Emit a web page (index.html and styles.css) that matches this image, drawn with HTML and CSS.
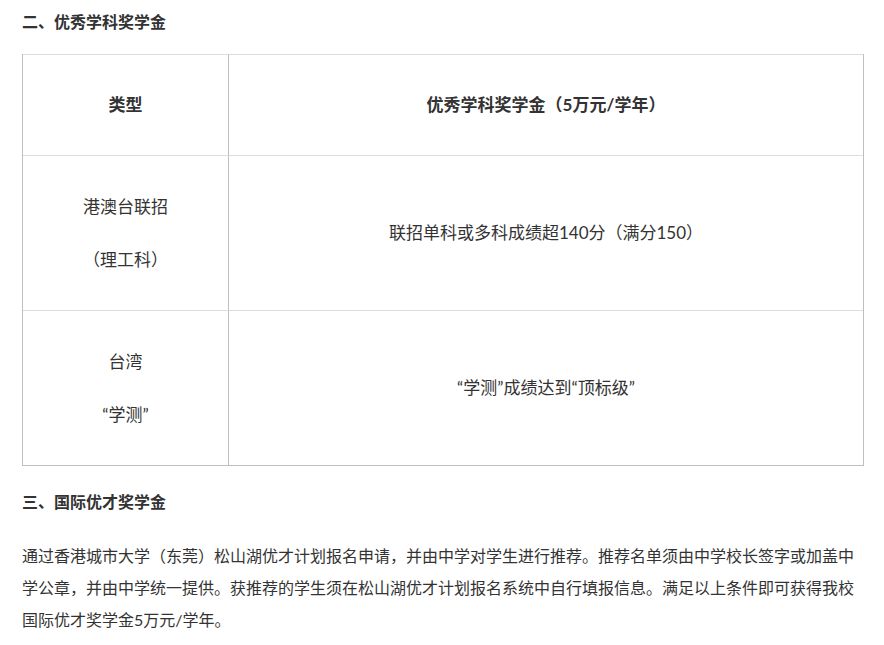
FILE: index.html
```html
<!DOCTYPE html>
<html lang="zh-CN">
<head>
<meta charset="utf-8">
<title>奖学金</title>
<link rel="stylesheet" href="styles.css">
</head>
<body>
<div class="content">
  <h3 class="sec-title">二、优秀学科奖学金</h3>
  <table class="award-table">
    <tr class="head-row">
      <td class="col-type">类型</td>
      <td class="col-val">优秀学科奖学金（5万元/学年）</td>
    </tr>
    <tr class="body-row">
      <td class="col-type"><p>港澳台联招</p><p>（理工科）</p></td>
      <td class="col-val">联招单科或多科成绩超140分（满分150）</td>
    </tr>
    <tr class="body-row">
      <td class="col-type"><p>台湾</p><p>“学测”</p></td>
      <td class="col-val">“学测”成绩达到“顶标级”</td>
    </tr>
  </table>
  <h3 class="sec-title sec-title-2">三、国际优才奖学金</h3>
  <p class="para">通过香港城市大学（东莞）松山湖优才计划报名申请，并由中学对学生进行推荐。推荐名单须由中学校长签字或加盖中学公章，并由中学统一提供。获推荐的学生须在松山湖优才计划报名系统中自行填报信息。满足以上条件即可获得我校国际优才奖学金5万元/学年。</p>
</div>
</body>
</html>
```

FILE: styles.css
```css
html, body {
  margin: 0;
  padding: 0;
  background: #fff;
}
body {
  font-family: "Lato", "Noto Sans CJK SC", sans-serif;
  font-size: 16px;
  color: #333;
}
.content {
  width: 842px;
  padding: 10px 0 0 22px;
}
.sec-title {
  margin: 0;
  font-size: 16px;
  line-height: 24px;
  font-weight: bold;
}
.sec-title-2 {
  margin-top: 24px;
}
.award-table {
  margin-top: 20px;
  width: 842px;
  font-size: 17px;
  border-collapse: separate;
  border-spacing: 0;
  border-left: 1px solid #bfbfbf;
  border-right: 1px solid #bfbfbf;
  border-bottom: 1px solid #bfbfbf;
  table-layout: fixed;
}
.award-table td {
  border-top: 1px solid #dddddd;
  text-align: center;
  vertical-align: middle;
  line-height: 28px;
  padding: 0 8px;
}
.award-table td.col-type {
  width: 189px;
}
.award-table td.col-val {
  border-left: 1px solid #bfbfbf;
}
.head-row td {
  height: 100px;
  font-weight: bold;
}
.body-row td {
  height: 154px;
}
.award-table p {
  margin: 0;
}
.award-table p + p {
  margin-top: 25px;
}
.para {
  margin: 26px 0 0 0;
  line-height: 32px;
}
```
